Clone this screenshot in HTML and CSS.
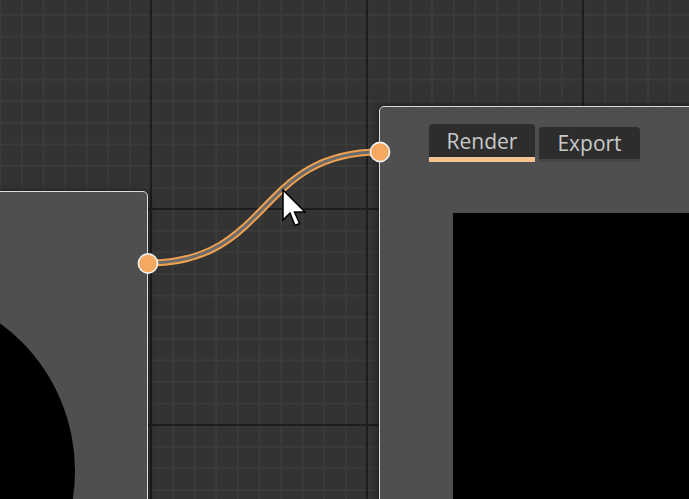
FILE: index.html
```html
<!DOCTYPE html>
<html>
<head>
<meta charset="utf-8">
<link rel="stylesheet" href="styles.css">
</head>
<body>
<div class="canvas">
  <div class="node node-left">
    <svg class="preview-left" width="360" height="400" viewBox="0 0 360 400">
      <circle cx="103" cy="279" r="183" fill="#000"/>
    </svg>
  </div>
  <div class="node node-right">
    <div class="tabs">
      <div class="tab active">Render</div>
      <div class="tab">Export</div>
    </div>
    <div class="preview-right"></div>
  </div>
  <svg class="overlay" width="689" height="499" viewBox="0 0 689 499">
    <path d="M148 263 C272 263 256 152 380 152" fill="none" stroke="#efa14f" stroke-width="7"/>
    <path d="M148 263 C272 263 256 152 380 152" fill="none" stroke="#6b6b6b" stroke-width="3"/>
    <circle cx="148" cy="263.5" r="9.6" fill="#f4a860" stroke="#f2f2f2" stroke-width="1.6"/>
    <circle cx="380" cy="152" r="9.6" fill="#f4a860" stroke="#f2f2f2" stroke-width="1.6"/>
    <polygon transform="translate(283 190)" points="0,0 0,30 7,23 12,35.5 16.5,33.5 11.5,22 22,22" fill="#fff" stroke="#000" stroke-width="1.5" stroke-linejoin="miter"/>
  </svg>
</div>
</body>
</html>
```
FILE: styles.css
```css
html, body {
  margin: 0;
  padding: 0;
}
body {
  width: 689px;
  height: 499px;
  overflow: hidden;
  background: #333333;
  font-family: "Open Sans", "Noto Sans", sans-serif;
}
.canvas {
  position: relative;
  width: 689px;
  height: 499px;
  overflow: hidden;
  background-color: #333333;
  background-image:
    linear-gradient(to right, #1d1d1d 2px, transparent 2px),
    linear-gradient(to bottom, #1d1d1d 2px, transparent 2px),
    linear-gradient(to right, #3b3b3b 1.5px, transparent 1.5px),
    linear-gradient(to bottom, #3b3b3b 1.5px, transparent 1.5px);
  background-size: 216px 216px, 216px 216px, 21.6px 21.6px, 21.6px 21.6px;
  background-position: 150px 0, 0 208px, -0.7px 0, 0 13.9px;
}
.node {
  position: absolute;
  box-sizing: border-box;
  background: #4f4f4f;
  border: 1.5px solid #dadada;
  border-radius: 5px;
  box-shadow: 0 0 8px rgba(0, 0, 0, 0.55);
  overflow: hidden;
}
.node-left {
  left: -212px;
  top: 191px;
  width: 360px;
  height: 400px;
}
.preview-left {
  display: block;
}
.node-right {
  left: 379px;
  top: 106px;
  width: 400px;
  height: 500px;
  padding: 16.5px 0 0 49px;
}
.tabs {
  display: flex;
  align-items: flex-end;
  gap: 4px;
}
.tab {
  box-sizing: border-box;
  display: flex;
  justify-content: center;
  background: #2d2d2d;
  color: #c9c9c9;
  font-size: 21px;
  line-height: 29px;
  border-radius: 4px 4px 0 0;
  width: 101px;
  height: 35px;
  padding-top: 2px;
  border-bottom: 3px solid #464646;
}
.tab.active {
  width: 106px;
  height: 38px;
  padding-top: 3px;
  border-bottom: 5px solid #f5c391;
}
.preview-right {
  margin: 51px 0 0 24px;
  width: 320px;
  height: 320px;
  background: #000;
}
.overlay {
  position: absolute;
  left: 0;
  top: 0;
  pointer-events: none;
}
```
